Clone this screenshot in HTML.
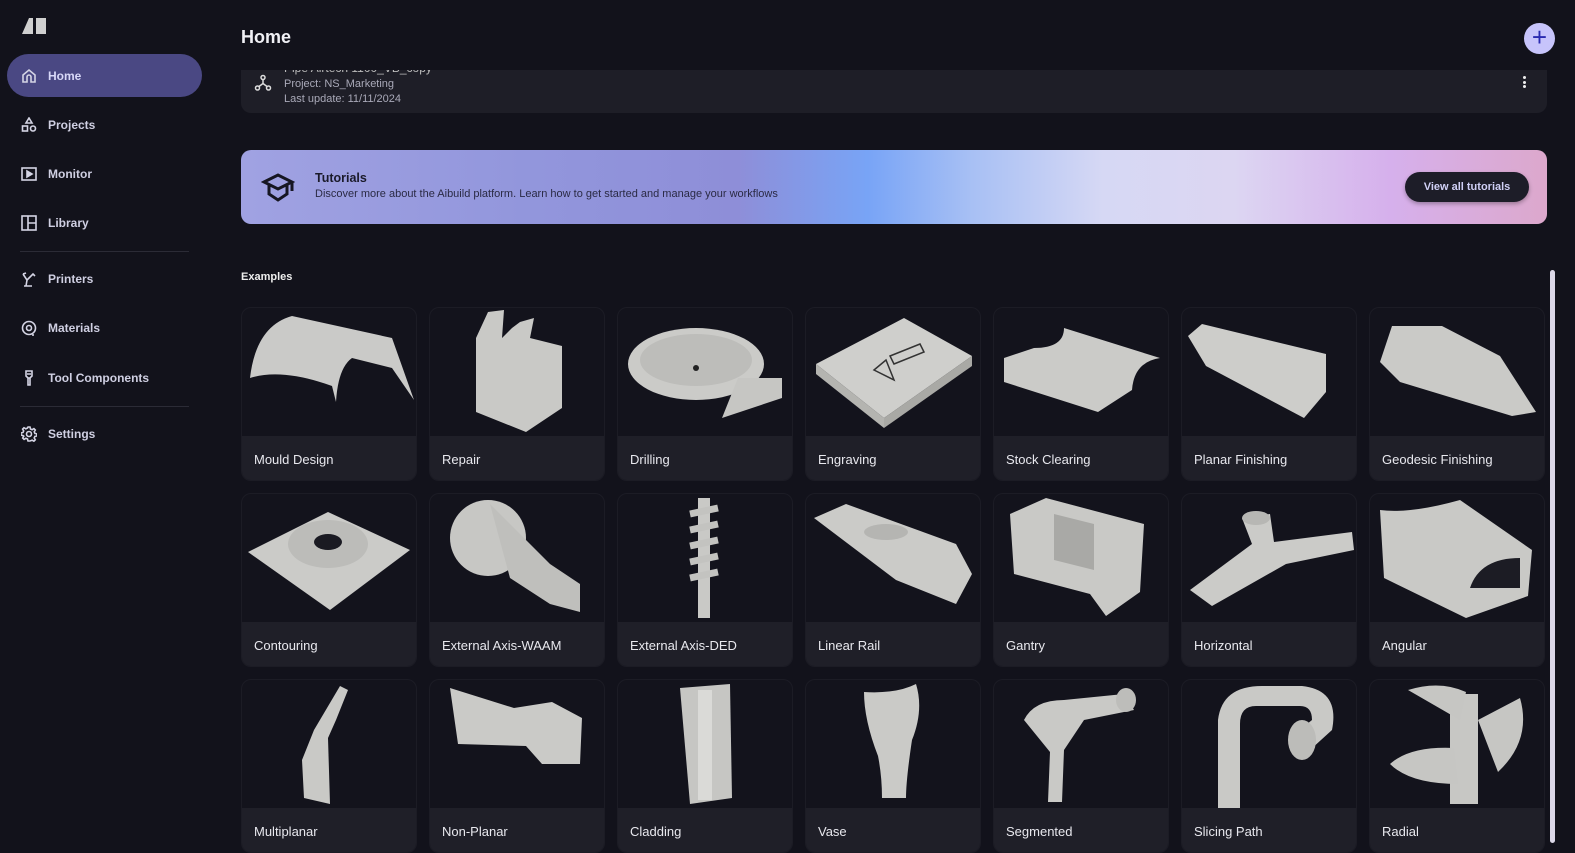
<!DOCTYPE html>
<html><head><meta charset="utf-8"><style>
*{margin:0;padding:0;box-sizing:border-box}
body{width:1575px;height:843px;overflow:hidden;background:#12121b;font-family:"Liberation Sans",sans-serif;color:#e4e4ee;position:relative}
.nav{position:absolute;left:0;top:0;width:215px;height:843px}
.logo{position:absolute;left:22px;top:17px}
.item{position:absolute;left:7px;width:195px;height:43px;border-radius:22px;display:flex;align-items:center;padding-left:14px;font-size:12px;font-weight:bold;color:#cfcfe2}
.item svg{width:16px;height:16px;margin-right:11px;fill:none;stroke:#d4d4e4;stroke-width:1.6}
.item.act{background:#4a4883;color:#d8d8f8}
.div{position:absolute;left:20px;width:169px;height:1px;background:#2b2b36}
h1{position:absolute;left:241px;top:27px;font-size:18px;font-weight:bold;color:#f0f0f5}
.plus{position:absolute;left:1524px;top:23px;width:31px;height:31px;border-radius:50%;background:#c7c4fb;color:#2a2ab0;font-size:26px;line-height:29px;text-align:center}
.recent{position:absolute;left:241px;top:70px;width:1306px;height:43px;background:#1e1e27;border-radius:0 0 10px 10px;overflow:hidden}
.recent .t{position:absolute;left:43px;top:-9px;font-size:12px;color:#bbb}
.recent .s{position:absolute;left:43px;font-size:11px;color:#a9a9b8}
.banner{position:absolute;left:241px;top:150px;width:1306px;height:74px;border-radius:10px;background:linear-gradient(90deg,#a0a2e2 0%,#9296dc 22%,#8e8ed8 38%,#78a4f6 48%,#a8c0f4 56%,#d6d8f4 66%,#dcd6f2 76%,#d6b0ec 88%,#dca8cc 100%)}
.banner .t{position:absolute;left:74px;top:21px;font-size:12.5px;font-weight:bold;color:#1a1a2a}
.banner .d{position:absolute;left:74px;top:38px;font-size:11px;color:#2a2a44}
.btn{position:absolute;left:1164px;top:22px;width:124px;height:30px;border-radius:15px;background:#1d1d28;color:#d0d0f6;font-size:11px;font-weight:bold;text-align:center;line-height:30px;box-shadow:0 2px 4px rgba(0,0,0,.3)}
.ex{position:absolute;left:241px;top:271px;font-size:11px;font-weight:bold;color:#eee}
.card{position:absolute;width:176px;height:174px;border-radius:10px;background:#13131c;border:1px solid #1c1c25;overflow:hidden}
.card svg{position:absolute;left:0;top:0;width:176px;height:128px}
.card .l{position:absolute;left:0;top:128px;width:176px;height:46px;background:#1f1f28;font-size:13px;color:#e8e8ee;padding:16px 0 0 12px}
.sb{position:absolute;left:1550px;top:270px;width:5px;height:573px;background:#dcd8e8;border-radius:3px}
</style></head><body>
<div class="nav">
<svg class="logo" width="26" height="18" viewBox="0 0 26 18"><polygon points="0,17 7,1 11,1 11,17" fill="#d0d0d0"/><rect x="14" y="1" width="10" height="16" fill="#d0d0d0"/></svg>
<div class="item act" style="top:54px"><svg viewBox="0 0 16 16"><path d="M2 7L8 2l6 5v7H10V9a2 2 0 0 0-4 0v5H2z"/></svg>Home</div>
<div class="item" style="top:103px"><svg viewBox="0 0 16 16"><path d="M8 1l3 5H5z"/><rect x="1.5" y="9" width="5" height="5"/><circle cx="12" cy="11.5" r="2.5"/></svg>Projects</div>
<div class="item" style="top:152px"><svg viewBox="0 0 16 16"><rect x="1" y="2" width="14" height="12"/><path d="M6 5v6l5-3z" fill="#d4d4e4"/></svg>Monitor</div>
<div class="item" style="top:201px"><svg viewBox="0 0 16 16"><rect x="1" y="1" width="14" height="14"/><path d="M7 1v14M7 8h8"/></svg>Library</div>
<div class="div" style="top:251px"></div>
<div class="item" style="top:257px"><svg viewBox="0 0 16 16"><path d="M3 15h8M5 15l1-6-4-6M6 9l6-6 2 2M2 3l3-1"/></svg>Printers</div>
<div class="item" style="top:306px"><svg viewBox="0 0 16 16"><circle cx="8" cy="8" r="6.5"/><circle cx="8" cy="8" r="2.5"/><path d="M12 14v2"/></svg>Materials</div>
<div class="item" style="top:356px"><svg viewBox="0 0 16 16"><path d="M5 1h6v5l-2 2H7L5 6zM7 8v7h2V8M6 4h4"/></svg>Tool Components</div>
<div class="div" style="top:406px"></div>
<div class="item" style="top:412px"><svg viewBox="0 0 16 16"><circle cx="8" cy="8" r="2.5"/><path d="M7 1h2l.5 2 1.6.7 1.8-1.1 1.4 1.4-1.1 1.8.7 1.6 2 .5v2l-2 .5-.7 1.6 1.1 1.8-1.4 1.4-1.8-1.1-1.6.7L9 15H7l-.5-2-1.6-.7-1.8 1.1-1.4-1.4 1.1-1.8L2.1 9.6 0 9V7l2-.5.7-1.6-1.1-1.8 1.4-1.4 1.8 1.1L6.5 2z"/></svg>Settings</div>
</div>
<h1>Home</h1>
<div class="plus">+</div>
<div class="recent">
<svg style="position:absolute;left:13px;top:4px" width="18" height="18" viewBox="0 0 18 18" fill="none" stroke="#ddd" stroke-width="1.5"><circle cx="9" cy="3.5" r="2"/><circle cx="3.5" cy="14" r="2"/><circle cx="14.5" cy="14" r="2"/><path d="M9 5.5v4L5 12.5M9 9.5l4 3"/></svg>
<div class="t">Pipe Airtech 1100_VB_copy</div>
<div class="s" style="top:8px">Project: NS_Marketing</div>
<div class="s" style="top:23px">Last update: 11/11/2024</div>
<div style="position:absolute;left:1282px;top:6px;width:3px;line-height:4px;font-size:0"><i style="display:block;width:3px;height:3px;background:#eee;margin-bottom:1.5px;border-radius:50%"></i><i style="display:block;width:3px;height:3px;background:#eee;margin-bottom:1.5px;border-radius:50%"></i><i style="display:block;width:3px;height:3px;background:#eee;border-radius:50%"></i></div>
</div>
<div class="banner">
<svg style="position:absolute;left:20px;top:20px" width="34" height="34" viewBox="0 0 34 34" fill="none" stroke="#161622" stroke-width="3"><path d="M3 12L17 5l14 7-14 7zM8 15v9l9 6 9-6v-9M31 12v9"/></svg>
<div class="t">Tutorials</div>
<div class="d">Discover more about the Aibuild platform. Learn how to get started and manage your workflows</div>
<div class="btn">View all tutorials</div>
</div>
<div class="ex">Examples</div>
<div class="sb"></div>

<!-- row 1 -->
<div class="card" style="left:241px;top:307px"><svg viewBox="0 0 176 128"><path d="M8 70Q14 18 50 8L150 30 172 92 150 60 110 50Q96 60 94 94L90 78Q40 60 8 70z" fill="#cacac8"/></svg><div class="l">Mould Design</div></div>
<div class="card" style="left:429px;top:307px"><svg viewBox="0 0 176 128"><path d="M46 30L58 4 74 2 72 30 82 20 90 14 104 10 100 30 132 38 132 100 96 124 46 104z" fill="#c9c9c6"/></svg><div class="l">Repair</div></div>
<div class="card" style="left:617px;top:307px"><svg viewBox="0 0 176 128"><ellipse cx="78" cy="56" rx="68" ry="36" fill="#cbcbc8"/><path d="M120 70l44 0 0 20-60 20z" fill="#c6c6c3"/><ellipse cx="78" cy="52" rx="56" ry="26" fill="#bdbdba"/><circle cx="78" cy="60" r="3" fill="#222"/></svg><div class="l">Drilling</div></div>
<div class="card" style="left:805px;top:307px"><svg viewBox="0 0 176 128"><path d="M10 56L98 10 166 48 78 110z" fill="#cfcfcc"/><path d="M10 56v10L78 120V110z" fill="#b4b4b0"/><path d="M78 110v10L166 58V48z" fill="#a9a9a5"/><path d="M68 62l12-10 8 20zM84 48l30-12 4 8-30 12z" fill="none" stroke="#333" stroke-width="1.5"/></svg><div class="l">Engraving</div></div>
<div class="card" style="left:993px;top:307px"><svg viewBox="0 0 176 128"><path d="M10 50L40 40Q70 40 70 20L166 50Q140 54 138 82L104 104 10 74z" fill="#cbcbc8"/></svg><div class="l">Stock Clearing</div></div>
<div class="card" style="left:1181px;top:307px"><svg viewBox="0 0 176 128"><path d="M6 28L20 16 144 46 144 84 122 110 24 58z" fill="#cdcdca"/></svg><div class="l">Planar Finishing</div></div>
<div class="card" style="left:1369px;top:307px"><svg viewBox="0 0 176 128"><path d="M10 54L22 18 72 18 130 48 166 104 142 108 30 74z" fill="#cacac7"/></svg><div class="l">Geodesic Finishing</div></div>
<!-- row 2 -->
<div class="card" style="left:241px;top:493px"><svg viewBox="0 0 176 128"><path d="M6 58L86 18 168 56 88 116z" fill="#cbcbc8"/><ellipse cx="86" cy="50" rx="40" ry="24" fill="#bcbcb9"/><ellipse cx="86" cy="48" rx="14" ry="8" fill="#1a1a22"/></svg><div class="l">Contouring</div></div>
<div class="card" style="left:429px;top:493px"><svg viewBox="0 0 176 128"><ellipse cx="58" cy="44" rx="38" ry="38" fill="#c7c7c4"/><path d="M60 10L120 70 150 90 150 118 120 110 80 84z" fill="#bfbfbc"/></svg><div class="l">External Axis-WAAM</div></div>
<div class="card" style="left:617px;top:493px"><svg viewBox="0 0 176 128"><path d="M80 4h12v120H80z" fill="#c9c9c6"/><path d="M72 20l28-6M72 36l28-6M72 52l28-6M72 68l28-6M72 84l28-6" stroke="#c3c3c0" stroke-width="7"/></svg><div class="l">External Axis-DED</div></div>
<div class="card" style="left:805px;top:493px"><svg viewBox="0 0 176 128"><path d="M8 24L40 10 150 50 166 80 150 110 90 86z" fill="#cbcbc8"/><ellipse cx="80" cy="38" rx="22" ry="8" fill="#b5b5b2"/></svg><div class="l">Linear Rail</div></div>
<div class="card" style="left:993px;top:493px"><svg viewBox="0 0 176 128"><path d="M16 20L52 4 150 30 146 98 112 122 96 100 20 80z" fill="#c9c9c6"/><path d="M60 20l40 10v46L60 66z" fill="#a9a9a6"/></svg><div class="l">Gantry</div></div>
<div class="card" style="left:1181px;top:493px"><svg viewBox="0 0 176 128"><path d="M8 96L70 50 60 24 88 20 92 48 170 38 172 56 104 70 30 112z" fill="#cbcbc8"/><ellipse cx="74" cy="24" rx="14" ry="7" fill="#b7b7b4"/></svg><div class="l">Horizontal</div></div>
<div class="card" style="left:1369px;top:493px"><svg viewBox="0 0 176 128"><path d="M10 16Q40 20 90 6L162 56 158 102 96 124 14 84z" fill="#c9c9c6"/><path d="M100 94q10-30 50-30v30z" fill="#1c1c24"/></svg><div class="l">Angular</div></div>
<!-- row 3 -->
<div class="card" style="left:241px;top:679px"><svg viewBox="0 0 176 128"><path d="M98 6L106 10 94 40 86 58 88 124 62 118 60 80 72 50z" fill="#c9c9c6"/></svg><div class="l">Multiplanar</div></div>
<div class="card" style="left:429px;top:679px"><svg viewBox="0 0 176 128"><path d="M20 8L84 28 122 22 152 38 150 84 112 84 96 66 28 64z" fill="#cacac7"/></svg><div class="l">Non-Planar</div></div>
<div class="card" style="left:617px;top:679px"><svg viewBox="0 0 176 128"><path d="M62 8L112 4 114 118 72 124z" fill="#c6c6c3"/><path d="M80 10h14v110H80z" fill="#dadad7"/></svg><div class="l">Cladding</div></div>
<div class="card" style="left:805px;top:679px"><svg viewBox="0 0 176 128"><path d="M58 12Q90 14 110 4Q118 30 106 60Q100 100 100 118H76Q76 96 72 76Q58 40 58 12z" fill="#cacac7"/></svg><div class="l">Vase</div></div>
<div class="card" style="left:993px;top:679px"><svg viewBox="0 0 176 128"><path d="M30 40Q40 20 70 20L130 14 140 30 90 40 70 70 68 122 54 122 56 72z" fill="#c9c9c6"/><ellipse cx="132" cy="20" rx="10" ry="12" fill="#bdbdba"/></svg><div class="l">Segmented</div></div>
<div class="card" style="left:1181px;top:679px"><svg viewBox="0 0 176 128"><path d="M36 128V40Q40 6 80 6H120Q158 10 150 50L128 70 108 58 130 40Q130 26 118 26H74Q58 26 58 44V128z" fill="#c9c9c6"/><ellipse cx="120" cy="60" rx="14" ry="20" fill="#bcbcb9"/></svg><div class="l">Slicing Path</div></div>
<div class="card" style="left:1369px;top:679px"><svg viewBox="0 0 176 128"><rect x="80" y="14" width="28" height="110" fill="#c7c7c4"/><path d="M38 10Q70 0 96 12L90 40zM108 40L150 18Q162 60 128 92zM20 84Q40 66 84 68L88 104Q40 104 20 84z" fill="#c6c6c3"/></svg><div class="l">Radial</div></div>
</body></html>
